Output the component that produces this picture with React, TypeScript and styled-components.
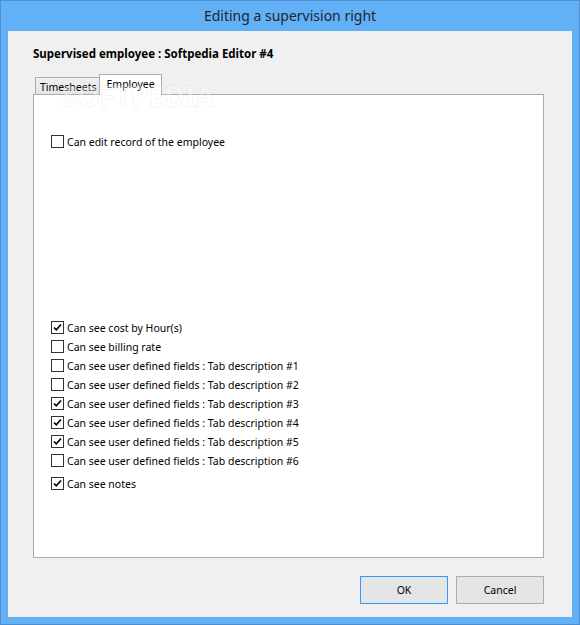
import React from "react";
import styled, { createGlobalStyle } from "styled-components";

const Global = createGlobalStyle`
  html, body { margin: 0; padding: 0; background: #ffffff; }
  body { font-family: "Noto Sans", "Open Sans", sans-serif; }
`;

const Window = styled.div`
  box-sizing: border-box;
  width: 580px;
  height: 625px;
  background: #62b1f7;
  border: 1px solid #4d8fd1;
  display: flex;
  flex-direction: column;
  padding: 0 7px 7px 7px;
`;

const TitleBar = styled.div`
  height: 30px;
  display: flex;
  align-items: center;
  justify-content: center;
  font-size: 14px;
  color: #1e2530;
  padding-bottom: 1px;
  box-sizing: border-box;
`;

const Client = styled.div`
  flex: 1;
  background: #f0f0f0;
  display: flex;
  flex-direction: column;
  padding: 0 28px 0 25px;
  position: relative;
`;

const Heading = styled.div`
  height: 44px;
  display: flex;
  align-items: center;
  font-size: 11.5px;
  font-weight: 700;
  color: #000;
  padding-top: 1px;
  box-sizing: border-box;
`;

const TabStrip = styled.div`
  display: flex;
  align-items: flex-end;
  height: 20px;
  margin-left: 2px;
  margin-bottom: -1px;
  position: relative;
  z-index: 1;
`;

const Tab = styled.div<{ $active?: boolean }>`
  box-sizing: border-box;
  height: ${(p) => (p.$active ? "21px" : "18px")};
  padding: ${(p) => (p.$active ? "0 6px 2px 6px" : "1px 3px 0 4px")};
  border: 1px solid #acacac;
  border-bottom: ${(p) => (p.$active ? "none" : "1px solid #acacac")};
  border-right: ${(p) => (p.$active ? "1px solid #acacac" : "none")};
  background: ${(p) => (p.$active ? "#ffffff" : "linear-gradient(#f0f0f0, #e5e5e5)")};
  font-size: 10.5px;
  color: #000;
  display: flex;
  align-items: center;
`;

const Panel = styled.div`
  box-sizing: border-box;
  width: 511px;
  height: 464px;
  background: #ffffff;
  border: 1px solid #acacac;
  display: flex;
  flex-direction: column;
  padding-left: 17px;
`;

const Row = styled.label<{ $gap?: number }>`
  height: 19px;
  display: flex;
  align-items: center;
  gap: 3px;
  font-size: 10.5px;
  color: #000;
  margin-top: ${(p) => p.$gap ?? 0}px;
`;

const Box = styled.span`
  box-sizing: border-box;
  width: 13px;
  height: 13px;
  border: 1px solid #333333;
  background: #ffffff;
  display: flex;
  align-items: center;
  justify-content: center;
  flex: none;
`;

const Footer = styled.div`
  display: flex;
  justify-content: flex-end;
  gap: 8px;
  margin-top: 18px;
`;

const Button = styled.div<{ $default?: boolean }>`
  box-sizing: border-box;
  width: 88px;
  height: 28px;
  background: #e5e5e5;
  border: 1px solid ${(p) => (p.$default ? "#3399ff" : "#adadad")};
  font-size: 10.5px;
  color: #000;
  display: flex;
  align-items: center;
  justify-content: center;
`;

const Watermark = styled.div`
  position: absolute;
  left: 54px;
  top: 46px;
  font-size: 28px;
  font-weight: 700;
  color: rgba(255, 255, 255, 0.35);
  -webkit-text-stroke: 1px rgba(200, 200, 200, 0.18);
  pointer-events: none;
  z-index: 2;
`;

const Check: React.FC<{ checked?: boolean }> = ({ checked }) => (
  <Box>
    {checked && (
      <svg width="11" height="11" viewBox="0 0 11 11">
        <path d="M2 5.5 L4.3 7.8 L9 2.5" fill="none" stroke="#000" strokeWidth="1.7" />
      </svg>
    )}
  </Box>
);

const items: { label: string; checked: boolean }[] = [
  { label: "Can see cost by Hour(s)", checked: true },
  { label: "Can see billing rate", checked: false },
  { label: "Can see user defined fields : Tab description #1", checked: false },
  { label: "Can see user defined fields : Tab description #2", checked: false },
  { label: "Can see user defined fields : Tab description #3", checked: true },
  { label: "Can see user defined fields : Tab description #4", checked: true },
  { label: "Can see user defined fields : Tab description #5", checked: true },
  { label: "Can see user defined fields : Tab description #6", checked: false },
];

export default function App() {
  return (
    <>
      <Global />
      <Window>
        <TitleBar>Editing a supervision right</TitleBar>
        <Client>
          <Heading>Supervised employee : Softpedia Editor #4</Heading>
          <TabStrip>
            <Tab>Timesheets</Tab>
            <Tab $active>Employee</Tab>
          </TabStrip>
          <Panel>
            <Row $gap={37}>
              <Check />
              Can edit record of the employee
            </Row>
            <Row $gap={167}>
              <Check checked={items[0].checked} />
              {items[0].label}
            </Row>
            {items.slice(1).map((it) => (
              <Row key={it.label}>
                <Check checked={it.checked} />
                {it.label}
              </Row>
            ))}
            <Row $gap={4}>
              <Check checked />
              Can see notes
            </Row>
          </Panel>
          <Footer>
            <Button $default>OK</Button>
            <Button>Cancel</Button>
          </Footer>
          <Watermark>SOFTPEDIA</Watermark>
        </Client>
      </Window>
    </>
  );
}
